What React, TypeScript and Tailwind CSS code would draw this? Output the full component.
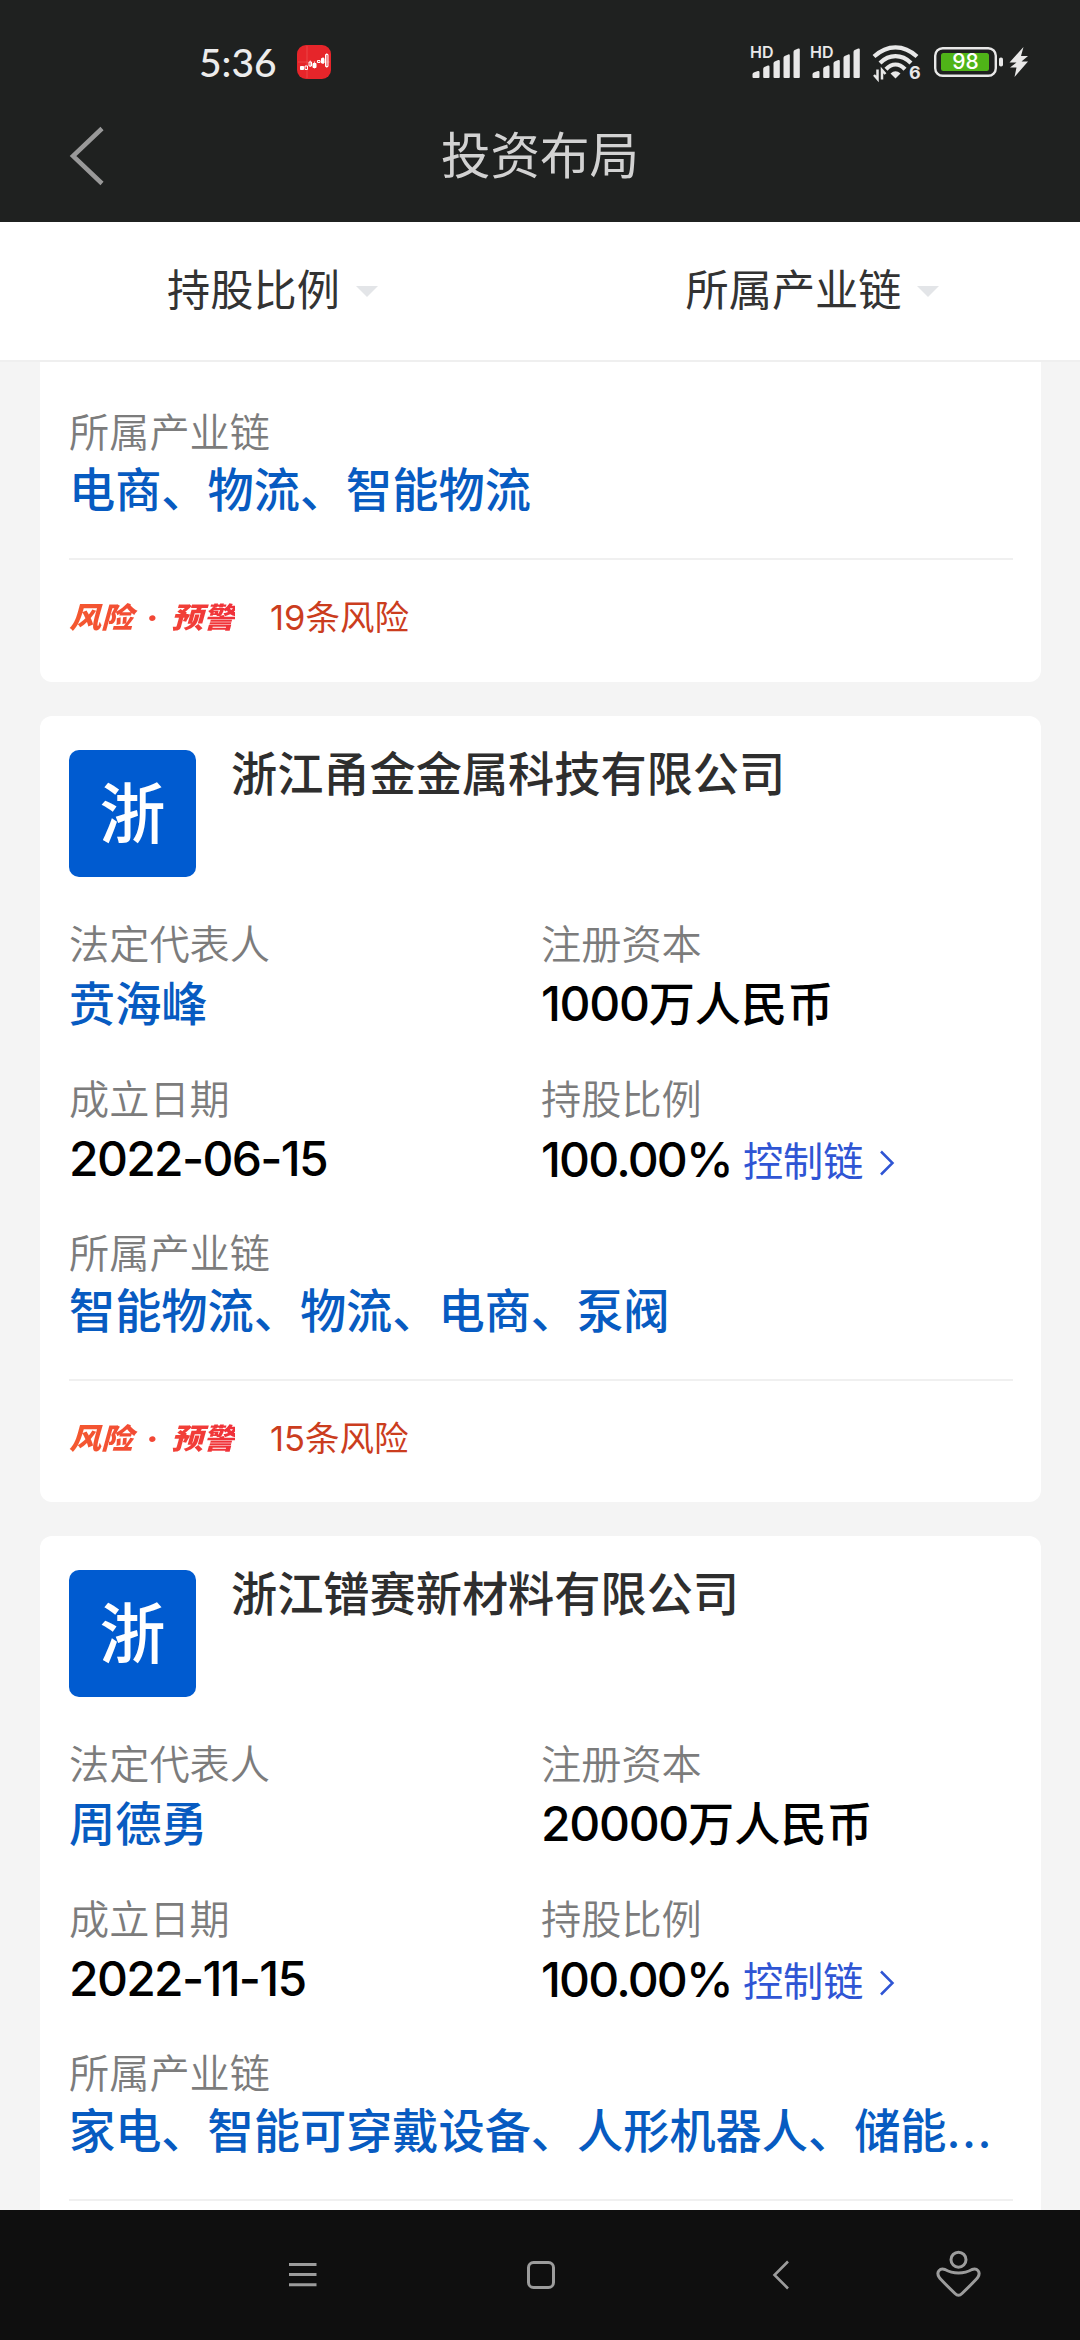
import React from 'react';

const SignalIcon = () => (
  <div className="relative w-[60px] h-[48px]">
    <span className="absolute left-0 top-[4px] text-[16px] leading-[16px] font-semibold text-[#e8e8e8]">HD</span>
    <svg className="block" width="60" height="48" viewBox="0 -1.500 60 48" fill="#e8e8e8">
      <path d="M2.500 35.500v-2.500q0-1.300 1.300-1.900l4-1.500q1.700-.4 1.700 1.200v4.700q0 1-1 1h-5q-1 0-1-1z" />
      <path d="M13.200 35.500v-8q0-1.300 1.200-1.900l3.500-1.500q1.600-.4 1.600 1.200v10.200q0 1-1 1h-4.300q-1 0-1-1z" />
      <path d="M23.500 35.500V22q0-1.300 1.200-1.900l3.500-1.500q1.600-.4 1.600 1.200v15.700q0 1-1 1h-4.300q-1 0-1-1z" />
      <path d="M33.500 35.500V16.300q0-1.300 1.200-1.900l3.500-1.500q1.600-.4 1.600 1.200v21.400q0 1-1 1h-4.300q-1 0-1-1z" />
      <path d="M43.500 35.500V10.500q0-1.300 1.200-1.900l3.500-1.500q1.600-.4 1.600 1.200v27.200q0 1-1 1h-4.300q-1 0-1-1z" />
    </svg>
  </div>
);

const WifiIcon = () => (
  <div className="relative w-[48px] h-[48px] ml-[2px]">
    <svg className="block" width="48" height="48" viewBox="0 0 48 48" fill="none" stroke="#e8e8e8">
      <path d="M2 16.500Q12 7.300 23.500 7.300T45 16.500" strokeWidth="4.200" />
      <path d="M8 23Q15 16.200 23.500 16.200T39 23" strokeWidth="4.200" />
      <path d="M14 29.200Q18.500 24.500 23.500 24.500T33 29.200" strokeWidth="4.200" />
      <path d="M18.500 33.500q5-4.500 10 0l-5 5z" fill="#e8e8e8" stroke="none" />
      <path d="M5.500 29.500v9.500l-3.500-4M10 39.500v-9.500l3.500 4" strokeWidth="2.500" />
    </svg>
    <span className="absolute left-[37px] top-[24px] text-[18px] leading-[18px] font-bold text-[#e8e8e8]">6</span>
  </div>
);

const BatteryIcon = () => (
  <div className="relative w-[98px] h-[48px] ml-[14px]">
    <svg className="block" width="98" height="48" viewBox="0 0 98 48">
      <rect x="1.200" y="8.200" width="60.600" height="27.600" rx="7.500" fill="none" stroke="#e8e8e8" strokeWidth="2.400" />
      <rect x="7" y="13" width="48" height="18" rx="2.500" fill="#4fb418" />
      <rect x="65" y="17.500" width="4" height="9" rx="1.800" fill="#e8e8e8" />
      <path d="M89.500 7 75.500 22.500h7L76 27.500h6.500L80.500 37 94 21.500h-6.500L94 16h-7z" fill="#e8e8e8" />
    </svg>
    <span className="absolute left-0 top-[12px] w-[63px] text-center text-[21px] leading-[20px] font-medium text-white">98</span>
  </div>
);

const StatusBar = () => (
  <div className="flex items-start justify-between h-[90px] pt-[38px] pl-[199px] pr-[48px]">
    <div className="flex items-center gap-[20px] h-[48px]">
      <span className="font-['Lato'] text-[39px] leading-[48px] font-medium text-[#ececec]">5:36</span>
      <svg width="34" height="34" viewBox="0 0 34 34">
        <rect width="34" height="34" rx="9" fill="#e6252a" />
        <path d="M10 1v32M1 17h32" stroke="#ef5a5a" strokeWidth=".6" />
        <g fill="#fff" stroke="#fff" strokeWidth="1">
          <path d="M3.500 21.500h3v3h-3zM16 18.500h3v4h-3zM24.500 13.500h2.500v4.500h-2.500z" />
          <path d="M8 21h2.500v3.500H8zM12 17h2.500v4H12zM20.500 15.500h2.500v2h-2.500zM28.500 9.500h2.500v12h-2.500z" fill="none" />
          <path d="M17.500 16.500v7M26 12v7M29.800 8v15M13.300 15.500v6.500" strokeWidth=".7" />
        </g>
      </svg>
    </div>
    <div className="flex h-[48px] mt-[2px]">
      <SignalIcon />
      <SignalIcon />
      <WifiIcon />
      <BatteryIcon />
    </div>
  </div>
);

const Header = () => (
  <header className="h-[222px] bg-[#1f2120] shrink-0">
    <StatusBar />
    <div className="grid grid-cols-3 items-center h-[132px]">
      <svg className="ml-[66px]" width="40" height="60" viewBox="0 0 40 60" fill="none" stroke="#999" strokeWidth="4.500">
        <path d="M36 2.500 7 30l29 27.500" />
      </svg>
      <h1 className="text-center text-[49.500px] leading-[60px] font-normal text-[#d2d2d2]">投资布局</h1>
    </div>
  </header>
);

const Filter = ({ label }: { label: string }) => (
  <div className="flex flex-1 items-center justify-center gap-[16px] pl-[5px]">
    <span className="-mt-[3px] text-[43.200px] leading-[60px] text-[#333]">{label}</span>
    <svg width="22" height="11" viewBox="0 0 22 11" fill="#e3e5e8">
      <path d="M0 0h22L11 11z" />
    </svg>
  </div>
);

const Field = ({ label, children }: { label: string; children: React.ReactNode }) => (
  <div className="h-[154.500px]">
    <div className="text-[40.200px] leading-[60px] font-[350] text-[#7c7c7c]">{label}</div>
    <div className="flex items-center text-[46.200px] leading-[58px] font-medium text-black whitespace-nowrap">{children}</div>
  </div>
);

const ChainField = ({ chains, more }: { chains: string; more?: boolean }) => (
  <Field label="所属产业链">
    <span className="-mt-[2px] text-[#075bc1]">
      {chains}
      {more && <span className="tracking-[1.500px]">...</span>}
    </span>
  </Field>
);

const Risk = ({ count }: { count: number }) => (
  <div className="flex items-center h-[120px] pb-[3px]">
    <div className="flex items-center w-[166px] justify-between scale-y-90 text-[32px] leading-[40px] font-black italic text-transparent bg-clip-text bg-linear-to-r from-[#f4592f] to-[#f0303a]">
      <span>风险</span>
      <span>·</span>
      <span>预警</span>
    </div>
    <span className="ml-[35px] text-[34.500px] leading-[40px] text-[#cb3d1e]">{count}条风险</span>
  </div>
);

type Company = {
  name: string;
  person: string;
  capital: string;
  date: string;
  ratio: string;
  chains: string;
  more?: boolean;
  risks?: number;
};

const COMPANIES: Company[] = [
  {
    name: '浙江甬金金属科技有限公司',
    person: '贲海峰',
    capital: '1000',
    date: '2022-06-15',
    ratio: '100.00%',
    chains: '智能物流、物流、电商、泵阀',
    risks: 15,
  },
  {
    name: '浙江镨赛新材料有限公司',
    person: '周德勇',
    capital: '20000',
    date: '2022-11-15',
    ratio: '100.00%',
    chains: '家电、智能可穿戴设备、人形机器人、储能',
    more: true,
  },
];

const CompanyCard = ({ company }: { company: Company }) => (
  <article className="h-[785.500px] shrink-0 rounded-[12px] bg-white pt-[34px] pl-[29px] pr-[28px]">
    <div className="flex h-[165px]">
      <div className="flex items-center justify-center size-[127px] rounded-[10px] bg-[#005bd0] text-[66px] leading-[66px] font-medium text-white">
        {company.name[0]}
      </div>
      <h2 className="ml-[35px] -mt-[6px] text-[46.200px] leading-[60px] font-medium text-[#2e2e2e]">{company.name}</h2>
    </div>
    <div className="grid grid-cols-2">
      <Field label="法定代表人">
        <span className="text-[#075bc1]">{company.person}</span>
      </Field>
      <Field label="注册资本">
        <span className="text-[48px] tracking-[-1.300px]">{company.capital}</span>万人民币
      </Field>
      <Field label="成立日期">
        <span className="text-[48px] tracking-[-1.700px]">{company.date}</span>
      </Field>
      <Field label="持股比例">
        <span className="text-[48px] tracking-[-1.800px]">{company.ratio}</span>
        <span className="ml-[11px] mt-[3px] text-[40.200px] font-normal text-[#2f55d4]">控制链</span>
        <svg className="ml-[15px] mt-[5px]" width="16" height="26" viewBox="0 0 16 26" fill="none" stroke="#2f55d4" strokeWidth="2.500">
          <path d="M2 1.500 13.500 13 2 24.500" />
        </svg>
      </Field>
    </div>
    <ChainField chains={company.chains} more={company.more} />
    <div className="border-t-2 border-[#f0f0f0]">
      {company.risks !== undefined && <Risk count={company.risks} />}
    </div>
  </article>
);

const NavBar = () => (
  <nav className="h-[130px] shrink-0 bg-[#0f0f0f]">
    <svg className="block" width="1080" height="130" viewBox="0 0 1080 130" fill="none" stroke="#9c9c9c" strokeWidth="3">
      <path d="M289 54.500h27.500M289 64.500h27.500M289 74.700h27.500" />
      <rect x="528.500" y="52.500" width="25" height="25" rx="5" />
      <path d="M788 51.500 774.500 65 788 78.500" strokeWidth="2.600" />
      <circle cx="958.500" cy="49.700" r="7.500" />
      <path d="M945 59.500Q951 63 958.500 63T972 59.500C977 57.500 981 62 978 67Q976.500 69.500 962 83.500Q958.500 87 955 83.500Q940.500 69.500 939 67C936 62 940 57.500 945 59.500z" />
    </svg>
  </nav>
);

export default function App() {
  return (
    <div className="flex flex-col w-[1080px] h-[2340px] overflow-hidden bg-[#f4f4f4] font-['Inter','Noto_Sans_CJK_SC',sans-serif]">
      <Header />
      <div className="flex h-[140px] shrink-0 bg-white border-b-2 border-[#efefef]">
        <Filter label="持股比例" />
        <Filter label="所属产业链" />
      </div>
      <main className="flex flex-col flex-1 min-h-0 gap-[34.500px] pl-[40px] pr-[39px] overflow-hidden">
        <section className="h-[319.500px] shrink-0 rounded-b-[12px] bg-white pt-[41px] pl-[29px] pr-[28px]">
          <ChainField chains="电商、物流、智能物流" />
          <div className="border-t-2 border-[#f0f0f0]">
            <Risk count={19} />
          </div>
        </section>
        {COMPANIES.map((company) => (
          <CompanyCard key={company.name} company={company} />
        ))}
      </main>
      <NavBar />
    </div>
  );
}
